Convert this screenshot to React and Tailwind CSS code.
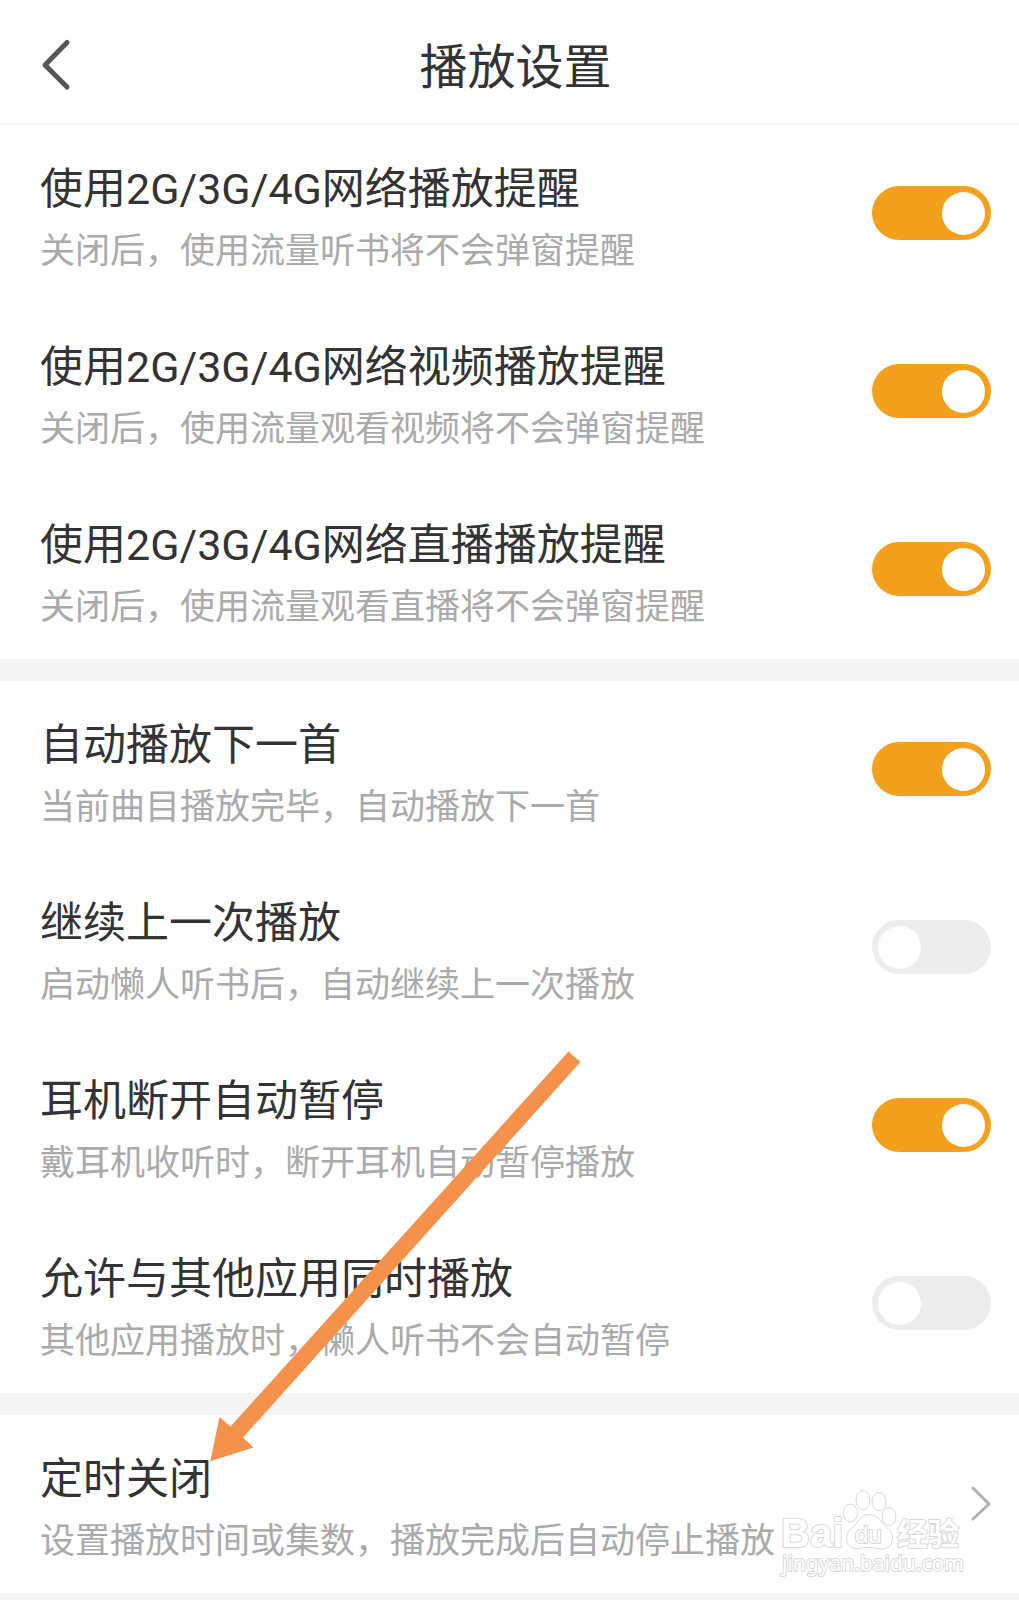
import { useState } from "react";

const networkSettings = [
  {
    id: "audio-reminder",
    label: "使用2G/3G/4G网络播放提醒",
    hint: "关闭后，使用流量听书将不会弹窗提醒",
    on: true,
  },
  {
    id: "video-reminder",
    label: "使用2G/3G/4G网络视频播放提醒",
    hint: "关闭后，使用流量观看视频将不会弹窗提醒",
    on: true,
  },
  {
    id: "live-reminder",
    label: "使用2G/3G/4G网络直播播放提醒",
    hint: "关闭后，使用流量观看直播将不会弹窗提醒",
    on: true,
  },
];

const playbackSettings = [
  {
    id: "auto-next",
    label: "自动播放下一首",
    hint: "当前曲目播放完毕，自动播放下一首",
    on: true,
  },
  {
    id: "resume-last",
    label: "继续上一次播放",
    hint: "启动懒人听书后，自动继续上一次播放",
    on: false,
  },
  {
    id: "pause-unplugged",
    label: "耳机断开自动暂停",
    hint: "戴耳机收听时，断开耳机自动暂停播放",
    on: true,
  },
  {
    id: "mix-audio",
    label: "允许与其他应用同时播放",
    hint: "其他应用播放时，懒人听书不会自动暂停",
    on: false,
  },
];

function RowText({ label, hint, htmlFor }) {
  const Label = htmlFor ? "label" : "span";
  return (
    <span className="flex min-w-0 flex-1 flex-col">
      <Label
        htmlFor={htmlFor}
        className="text-[43px] leading-[78px] text-[#333333]"
      >
        {label}
      </Label>
      <span
        id={htmlFor ? `${htmlFor}-hint` : undefined}
        className="text-[35px] leading-[48px] text-[#aaaaaa]"
      >
        {hint}
      </span>
    </span>
  );
}

function SettingRow({ item }) {
  const [on, setOn] = useState(item.on);

  return (
    <li className="flex items-center gap-4 pt-[25px] pr-7 pb-[27px] pl-10">
      <RowText label={item.label} hint={item.hint} htmlFor={item.id} />
      <input
        id={item.id}
        type="checkbox"
        role="switch"
        aria-describedby={`${item.id}-hint`}
        checked={on}
        onChange={(e) => setOn(e.target.checked)}
        className="flex h-[54px] w-[119px] shrink-0 cursor-pointer appearance-none items-center rounded-full bg-[#ededed] px-[6px] before:size-[43px] before:rounded-full before:bg-white checked:justify-end checked:bg-[#f3a01c]"
      />
    </li>
  );
}

function Watermark() {
  return (
    <svg
      viewBox="776 1486 190 96"
      className="pointer-events-none absolute right-[53px] bottom-[11px] h-[96px] w-[190px]"
      fill="#ffffff"
      stroke="#d8d8d8"
      strokeWidth="2"
      strokeLinejoin="round"
      paintOrder="stroke"
    >
      <text
        x="781"
        y="1547"
        fontSize="40"
        fontWeight="700"
        fontFamily="'Liberation Sans', sans-serif"
      >
        Bai
      </text>
      <g strokeWidth="1" paintOrder="normal">
        <ellipse cx="850.5" cy="1513" rx="7" ry="9" />
        <ellipse cx="863" cy="1500" rx="7" ry="9.5" />
        <ellipse cx="879" cy="1501.5" rx="7" ry="9" />
        <ellipse cx="889" cy="1516.5" rx="7" ry="9" />
        <path d="M869 1514.5c-6 0-9 4-12 8-4 6-10.5 8-10.5 15.5 0 7 4 11 11 10.5 4-.5 8-1 12-1s8 1.500 12 1.500c7 0 11-4 11-11 0-7-6-10-10-15-4-5-7-8.5-13.5-8.5z" />
      </g>
      <text
        x="855"
        y="1543"
        fontSize="24"
        fontFamily="'Liberation Sans', sans-serif"
      >
        du
      </text>
      <text
        x="897"
        y="1545"
        fontSize="31"
        fontWeight="700"
        fontFamily="'Noto Sans CJK SC', sans-serif"
      >
        经验
      </text>
      <text
        x="782"
        y="1571"
        fontSize="21"
        fontFamily="'Noto Sans', sans-serif"
      >
        jingyan.baidu.com
      </text>
    </svg>
  );
}

function Arrow() {
  return (
    <svg
      viewBox="210 1051 371 411"
      className="pointer-events-none absolute top-[1051px] left-[210px] h-[411px] w-[371px]"
      fill="#f4924b"
    >
      <path d="M210.3 1461.3L219.5 1417L230.5 1426.5L568.5 1051.5L580.5 1062L243 1437.5L253.5 1447.5Z" />
    </svg>
  );
}

export default function App() {
  return (
    <div className="relative flex min-h-screen flex-col bg-white font-[Roboto,'Noto_Sans_CJK_SC',sans-serif]">
      <header className="grid grid-cols-[1fr_auto_1fr] items-start border-b-2 border-[#f3f3f3] pt-8 pr-7 pb-[19px] pl-10">
        <button type="button" aria-label="返回" className="w-8 cursor-pointer">
          <svg
            viewBox="0 -6 32 64"
            className="h-16 w-8"
            fill="none"
            stroke="#555555"
            strokeWidth="5"
            strokeLinecap="round"
            strokeLinejoin="round"
          >
            <path d="M27 4.5L5 27L27 49" />
          </svg>
        </button>
        <h1 className="text-[48px] leading-[72px] text-[#333333]">播放设置</h1>
      </header>

      <main>
        <ul>
          {networkSettings.map((item) => (
            <SettingRow key={item.id} item={item} />
          ))}
        </ul>

        <ul className="border-y-[22px] border-[#f5f5f5]">
          {playbackSettings.map((item) => (
            <SettingRow key={item.id} item={item} />
          ))}
        </ul>

        <div className="relative">
          <a
            href="#timer"
            className="flex items-center gap-4 pt-[25px] pr-7 pb-[27px] pl-10"
          >
            <RowText
              label="定时关闭"
              hint="设置播放时间或集数，播放完成后自动停止播放"
            />
            <svg
              viewBox="0 0 20 36"
              className="h-9 w-5 shrink-0"
              fill="none"
              stroke="#b0b0b0"
              strokeWidth="3"
              strokeLinecap="round"
              strokeLinejoin="round"
            >
              <path d="M2 3L18 19L2 34" />
            </svg>
          </a>
          <Watermark />
        </div>
      </main>

      <div className="min-h-2 flex-1 bg-[#f5f5f5]" />
      <Arrow />
    </div>
  );
}
